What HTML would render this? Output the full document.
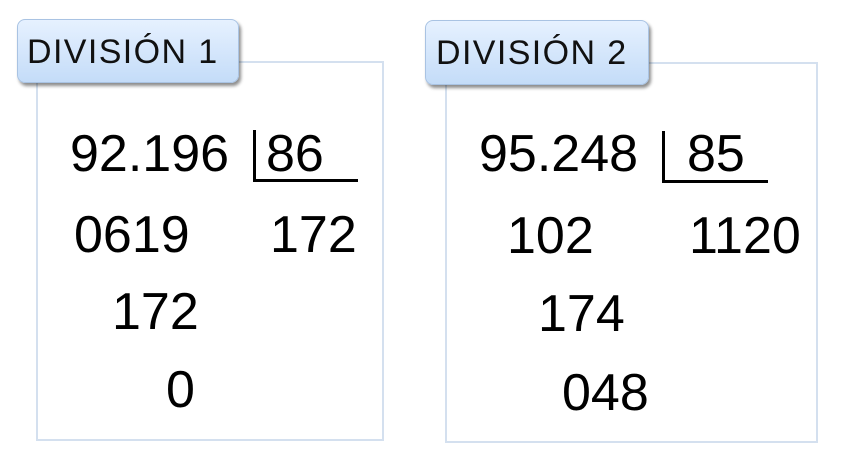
<!DOCTYPE html>
<html><head><meta charset="utf-8"><style>
body{margin:0;width:849px;height:473px;background:#fff;position:relative;overflow:hidden;font-family:"Liberation Sans",sans-serif}
.box{position:absolute;border:2px solid #d4e0ef;background:#fff}
.tab{position:absolute;border-radius:8px;background:linear-gradient(#e6f1ff,#c4dcf8);border:1px solid #a9c3e3;box-shadow:2px 3px 3px rgba(0,0,0,.45);font-size:34px;letter-spacing:1.4px;color:#111;line-height:1}
.n{position:absolute;font-size:52px;line-height:1;color:#000;white-space:pre}
.l{position:absolute;background:#000}
</style></head><body>
<div class="box" style="left:36px;top:61px;width:344px;height:376px"></div>
<div class="box" style="left:445px;top:62px;width:369px;height:377px"></div>
<div class="tab" style="left:17px;top:19px;width:220px;height:62px"><span style="position:absolute;left:9px;top:15px">DIVISIÓN 1</span></div>
<div class="tab" style="left:425px;top:20px;width:222px;height:63px"><span style="position:absolute;left:10px;top:15px">DIVISIÓN 2</span></div>

<div class="n" style="left:70px;top:128px">92.196</div>
<div class="l" style="left:253px;top:130px;width:3px;height:52px"></div>
<div class="l" style="left:253px;top:179px;width:105px;height:3px"></div>
<div class="n" style="left:266px;top:128px">86</div>
<div class="n" style="left:74px;top:209px">0619</div>
<div class="n" style="left:270px;top:209px">172</div>
<div class="n" style="left:112px;top:286px">172</div>
<div class="n" style="left:166px;top:364px">0</div>

<div class="n" style="left:479px;top:128px">95.248</div>
<div class="l" style="left:662px;top:131px;width:3px;height:52px"></div>
<div class="l" style="left:662px;top:180px;width:106px;height:3px"></div>
<div class="n" style="left:687px;top:128px">85</div>
<div class="n" style="left:507px;top:210px">102</div>
<div class="n" style="left:689px;top:210px">1120</div>
<div class="n" style="left:538px;top:288px">174</div>
<div class="n" style="left:562px;top:367px">048</div>
</body></html>
